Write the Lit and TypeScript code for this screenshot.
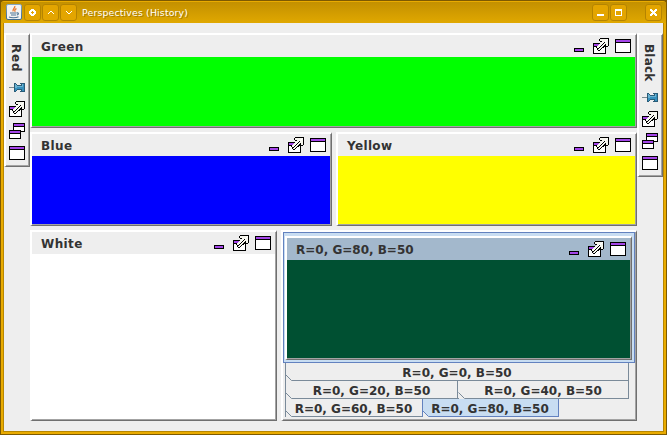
import { LitElement, html, css, svg } from "lit";
import { customElement, property } from "lit/decorators.js";

const INK: Record<string, string> = {
  k: "#000", w: "#fff", p: "#a445e8", g: "#f6f6ee",
  b: "#3790bd", l: "#6ab2d2", d: "#2a5c78", s: "#7b8a90",
};

const ICONS: Record<string, string[]> = {
  min: [
    "kkkkkkkkkk",
    "kppppppppk",
    "kppppppppk",
    "kkkkkkkkkk",
  ],
  max: [
    "kkkkkkkkkkkkkkkk",
    "kppppppppppppppk",
    "kppppppppppppppk",
    "kkkkkkkkkkkkkkkk",
    ...Array(9).fill("kwwwwwwwwwwwwwwk"),
    "kkkkkkkkkkkkkkkk",
  ],
  ext: [
    ".......kkkkkkkkk",
    "......kgggggggwk",
    "......kggggggwgk",
    ".......kkgggwggk",
    "........ggwkgggk",
    "kkkkkkkggwkggggk",
    "kpppppggwkggkggk",
    "kppppggwkggkkggk",
    "kkkkggwkggkkkkk.",
    "kwwkggkggkkwk...",
    "kwwwkkggkwwwk...",
    "kwwwkggkwwwwk...",
    "kwwwwkkwwwwwk...",
    "kwwwwwwwwwwwk...",
    "kwwwwwwwwwwwk...",
    "kkkkkkkkkkkkk...",
  ],
  norm: [
    "....kkkkkkkkkkkk",
    "....kppppppppppk",
    "....kppppppppppk",
    "....kkkkkkkkkkkk",
    "....kwwwwwwwwwwk",
    "....kwwwwwwwwwwk",
    "....kwwwwwwwwwwk",
    "kkkkkkkkkkkkwwwk",
    "kppppppppppkkkkk",
    "kppppppppppk....",
    "kkkkkkkkkkkk....",
    "kwwwwwwwwwwk....",
    "kwwwwwwwwwwk....",
    "kwwwwwwwwwwk....",
    "kwwwwwwwwwwk....",
    "kkkkkkkkkkkk....",
  ],
  pin: [
    ".....dd....ddddd",
    ".....dld....dlbd",
    ".....dlldddddlbd",
    ".....dllllllllbd",
    "sssssdllbbbbbbbd",
    ".....dbbbbbbbbbd",
    ".....dbbdddddbbd",
    ".....dbd....dbbd",
    ".....dd....ddddd",
  ],
  wheel: [
    "..www..",
    ".wwwww.",
    "www.www",
    "ww...ww",
    "www.www",
    ".wwwww.",
    "..www..",
  ],
  up: [
    "..ww..",
    ".w..w.",
    "w....w",
  ],
  down: [
    "w....w",
    ".w..w.",
    "..ww..",
  ],
  iconify: ["wwwwwww", "wwwwwww"],
  zoom: [
    "wwwwwww",
    "wwwwwww",
    "w.....w",
    "w.....w",
    "w.....w",
    "w.....w",
    "wwwwwww",
  ],
  close: [
    "ww...ww",
    "www.www",
    ".wwwww.",
    "..www..",
    ".wwwww.",
    "www.www",
    "ww...ww",
  ],
};

function icon(name: string) {
  const rows = ICONS[name];
  const w = rows[0].length;
  const runs: unknown[] = [];
  rows.forEach((row, y) => {
    for (let x = 0; x < w; ) {
      let e = x + 1;
      while (e < w && row[e] === row[x]) e++;
      if (INK[row[x]]) runs.push(svg`<rect x=${x} y=${y} width=${e - x} height="1" fill=${INK[row[x]]}></rect>`);
      x = e;
    }
  });
  return html`<svg class="icon ${name}" width=${w} height=${rows.length} viewBox="0 0 ${w} ${rows.length}" shape-rendering="crispEdges">${runs}</svg>`;
}

const bevel = css`
  * { box-sizing: border-box; }
  svg { display: block; flex: none; }
  .bevel {
    border: solid; border-width: 2px 1px 1px 2px; border-color: #fff #6f6f6f #6f6f6f #fff;
  }
  .inner { border: solid #a3a3a3; border-width: 0 1px 1px 0; height: 100%; }
`;

@customElement("dock-panel")
class DockPanel extends LitElement {
  @property() label = "";
  @property() fill = "";
  @property({ type: Number }) tracking = 0;
  @property({ type: Boolean }) active = false;
  static styles = [bevel, css`
    :host { display: block; min-width: 0; }
    .bevel { height: 100%; }
    .inner { display: flex; flex-direction: column; }
    .head { height: 22px; flex: none; display: flex; align-items: flex-start; padding: 3px 4px 0 9px; background: #eee; }
    .head.active { background: #a3b8cc; }
    .title { flex: 1; font: bold 12px/16px "DejaVu Sans", sans-serif; color: #333; white-space: nowrap; padding-top: 1px; }
    .body { flex: 1; }
    .min { margin: 10px 9px 0 0; }
    .ext { margin-right: 6px; }
    .max { margin-top: 1px; }
  `];
  render() {
    return html`<div class="bevel"><div class="inner">
      <div class="head ${this.active ? "active" : ""}"><span class="title" style="letter-spacing:${this.tracking}px">${this.label}</span>${icon("min")}${icon("ext")}${icon("max")}</div>
      <div class="body" style="background:${this.fill}"></div>
    </div></div>`;
  }
}

@customElement("dock-strip")
class DockStrip extends LitElement {
  @property() label = "";
  @property({ type: Number }) extent = 39;
  @property({ type: Number }) tracking = 0.5;
  static styles = [bevel, css`
    :host { display: block; width: 26px; flex: none; }
    .inner { display: flex; flex-direction: column; align-items: flex-start; padding: 9px 3px 5px; background: #eee; }
    .title { writing-mode: vertical-rl; font: bold 12px/16px "DejaVu Sans", sans-serif; color: #333; margin-left: -1px; }
    .ext { margin: 9px 0 6px; }
    .norm { margin-bottom: 7px; }
  `];
  render() {
    return html`<div class="bevel"><div class="inner">
      <span class="title" style="height:${this.extent}px;letter-spacing:${this.tracking}px">${this.label}</span>${icon("pin")}${icon("ext")}${icon("norm")}${icon("max")}
    </div></div>`;
  }
}

@customElement("tab-stack")
class TabStack extends LitElement {
  static styles = [bevel, css`
    :host { display: block; }
    .bevel { height: 100%; }
    .page { height: 131px; border: 1px solid #6382bf; background: #c8ddf2; padding: 3px 2px 2px 1px; }
    dock-panel { height: 124px; }
    .tabs { margin-left: 2px; width: 344px; }
    .run { display: flex; height: 18px; }
    .tab { position: relative; border: solid #7a8a99; border-width: 0 1px 1px 0; text-align: center;
      font: bold 12px/16px "DejaVu Sans", sans-serif; color: #333; white-space: nowrap; padding-top: 2px; }
    .tab.first { border-left-width: 1px; }
    .tab.on { background: #c8ddf2; border-color: #6382bf; border-left-width: 1px; }
    .a { width: 344px; }
    .b { width: 173px; }
    .c { width: 171px; }
    .d { width: 137px; border-right: 0; padding-right: 1px; }
    .e { width: 137px; padding-right: 1px; }
    .notch { position: absolute; left: 0; bottom: -1px; }
    .first .notch, .on .notch { left: -1px; }
  `];
  private tab(label: string, cls: string) {
    const on = cls.includes("on");
    return html`<div class="tab ${cls}"><svg class="notch" width="7" height="7" viewBox="0 0 7 7">
      <path d="M1 1V7H7Z" fill="#eee"></path><path d="M.5 .5L6.5 6.5" fill="none" stroke=${on ? "#6382bf" : "#7a8a99"}></path>
    </svg>${label}</div>`;
  }
  render() {
    return html`<div class="bevel"><div class="inner">
      <div class="page"><dock-panel label="R=0, G=80, B=50" fill="#005032" active></dock-panel></div>
      <div class="tabs">
        <div class="run">${this.tab("R=0, G=0, B=50", "first a")}</div>
        <div class="run">${this.tab("R=0, G=20, B=50", "first b")}${this.tab("R=0, G=40, B=50", "c")}</div>
        <div class="run">${this.tab("R=0, G=60, B=50", "first d")}${this.tab("R=0, G=80, B=50", "on e")}</div>
      </div>
    </div></div>`;
  }
}

@customElement("app-root")
class AppRoot extends LitElement {
  static styles = [bevel, css`
    :host { display: block; width: 667px; height: 435px; background: #7e5a00; overflow: hidden; }
    .frame { height: 435px; border: 1px solid #7e5a00; border-radius: 4px 4px 0 0; overflow: hidden; }
    .gold { height: 433px; border: solid #e9ab00; border-width: 1px 2px 2px; display: flex; flex-direction: column; }
    .bar { height: 21px; margin: 0 -2px; flex: none; display: flex; align-items: flex-start; padding: 2px 4px 0 5px;
      background: linear-gradient(#c39000, #e0a800); }
    .btn { width: 17px; height: 17px; border: 1px solid #b58400; border-radius: 3px; background: #e3a500;
      display: flex; align-items: center; justify-content: center; margin-right: 1px; flex: none; }
    .java { margin-right: 1px; }
    .caption { flex: 1; font: 9.4px/17px "DejaVu Sans", sans-serif; letter-spacing: .15px; color: #fff; padding-left: 4px; text-shadow: 1px 1px 0 #a87a00; }
    .iconify { margin-top: 5px; }
    .gap { margin-right: 18px; }
    .edge { margin-right: 0; }
    .content { flex: 1; border: solid #b88700; border-width: 0 1px 1px; background: #eee; padding-top: 10px; display: flex; align-items: flex-start; }
    .center { width: 607px; height: 388px; display: grid; grid-template-rows: 95px 94px 191px; row-gap: 4px; }
    .row { display: grid; column-gap: 4px; }
    .two { grid-template-columns: 302px 301px; }
    .three { grid-template-columns: 247px 356px; }
  `];
  render() {
    return html`<div class="frame"><div class="gold">
      <div class="bar">
        <svg class="java" width="17" height="17" viewBox="0 0 17 17">
          <defs><linearGradient id="j" x1="0" y1="0" x2="0" y2="1"><stop offset="0" stop-color="#85a5c0"></stop><stop offset="1" stop-color="#3e6a90"></stop></linearGradient></defs>
          <rect x=".5" y=".5" width="15" height="15" rx="1.5" fill="#f3f3f3" stroke="url(#j)"></rect>
          <path d="M8.8 2C9.5 4 6 5 7.2 7.4M10.5 4.6C8.5 5.5 8.5 6.3 9.2 7.8" fill="none" stroke="#e8762c" stroke-width="1.3"></path>
          <path d="M4 9H10.5M5 11H10M10.8 9C13 8.4 12.7 10.8 10.8 11M3 13C5 14 10 14 12.5 12.8" fill="none" stroke="#4c7494" stroke-width="1.2"></path>
        </svg>
        <div class="btn">${icon("wheel")}</div>
        <div class="btn">${icon("up")}</div>
        <div class="btn">${icon("down")}</div>
        <span class="caption">Perspectives (History)</span>
        <div class="btn">${icon("iconify")}</div>
        <div class="btn gap">${icon("zoom")}</div>
        <div class="btn edge">${icon("close")}</div>
      </div>
      <div class="content">
        <dock-strip label="Red" extent="39" tracking="0.8"></dock-strip>
        <div class="center">
          <dock-panel label="Green" fill="#0f0" tracking="0.45"></dock-panel>
          <div class="row two">
            <dock-panel label="Blue" fill="#00f" tracking="0.4"></dock-panel>
            <dock-panel label="Yellow" fill="#ff0" tracking="0.35"></dock-panel>
          </div>
          <div class="row three">
            <dock-panel label="White" fill="#fff" tracking="0.4"></dock-panel>
            <tab-stack></tab-stack>
          </div>
        </div>
        <dock-strip label="Black" extent="49" tracking="0.2"></dock-strip>
      </div>
    </div></div>`;
  }
}
